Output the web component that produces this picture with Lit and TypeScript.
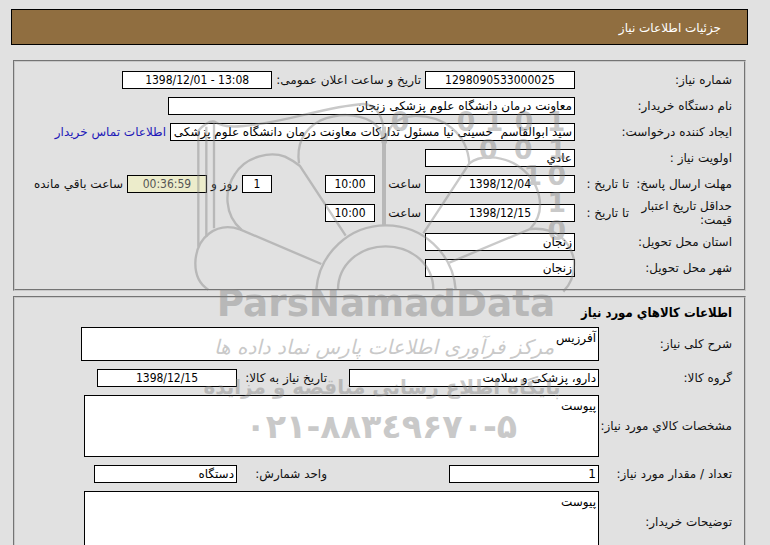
import { LitElement, html, css, svg } from "lit";
import { customElement, property } from "lit/decorators.js";

const digits = [
  { c: "0", x: 660, y: 152 },
  { c: "0", x: 858, y: 152 },
  { c: "1", x: 942, y: 152 },
  { c: "0", x: 1032, y: 152 },
  { c: "1", x: 1128, y: 152 },
  { c: "0", x: 925, y: 236 },
  { c: "0", x: 1030, y: 236 },
  { c: "1", x: 1132, y: 236 },
  { c: "1", x: 1058, y: 314 },
  { c: "0", x: 1130, y: 314 },
  { c: "1", x: 1130, y: 397 },
  { c: "0", x: 1130, y: 480 },
];

@customElement("site-watermark")
export class SiteWatermark extends LitElement {
  static styles = css`
    :host {
      display: block;
      pointer-events: none;
    }
    svg {
      display: block;
      width: 100%;
      height: auto;
      font-family: "DejaVu Sans", sans-serif;
    }
    .lines {
      fill: none;
      stroke: #808080;
      stroke-width: 7;
    }
    .spine {
      stroke-width: 12;
    }
    .art {
      opacity: 0.42;
    }
    .words,
    .bits {
      fill: #808080;
      text-anchor: middle;
    }
    .bits {
      font-size: 80px;
      font-weight: bold;
      direction: ltr;
    }
    .latin {
      font-size: 112px;
      font-weight: bold;
    }
    .script {
      font-size: 60px;
      font-style: italic;
    }
    .tagline {
      font-size: 60px;
      font-weight: bold;
    }
    .phone {
      font-size: 100px;
      font-weight: bold;
      direction: ltr;
      unicode-bidi: bidi-override;
    }
  `;

  render() {
    return html`
      <svg viewBox="0 0 1200 1140" aria-hidden="true">
        <g class="art">
          <g class="lines">
            <path d="M424 552 L180 448 C110 425 48 470 46 550 C46 590 62 615 85 629" />
            <path d="M185 450 C132 405 132 330 165 282 C200 225 275 215 315 230 C340 242 350 250 360 258 L497 467" />
            <path d="M357 250 C350 200 365 150 420 122 C470 100 530 98 575 125 C600 142 608 160 608 190" />
            <path d="M617 190 C620 140 650 112 700 108 C790 105 862 160 868 250 L730 460" />
            <path d="M868 250 C900 225 960 225 1010 255 C1080 300 1105 390 1050 447 L808 548" />
            <path d="M1050 447 C1125 440 1170 480 1182 540 C1185 580 1172 612 1150 635" />
            <path d="M409 629 A209 209 0 0 1 618 436 A209 209 0 0 1 827 629" />
            <path d="M474 629 C474 556 536 499 617 499 C698 499 760 556 760 629" />
            <path d="M55 500 V150 M79 470 V140 M102 445 V125" />
            <path d="M55 152 C75 130 90 122 104 125 C125 140 150 142 190 138 C320 128 430 80 550 72 C590 74 604 105 610 140" />
            <path class="spine" d="M612 140 V435" />
          </g>
          <g class="bits">
            ${digits.map((d) => svg`<text x=${d.x} y=${d.y}>${d.c}</text>`)}
          </g>
          <g class="words">
            <text class="latin" x="618" y="708">ParsNamadData</text>
            <text class="script" x="612" y="822">مرکز فرآوری اطلاعات پارس نماد داده ها</text>
            <text class="tagline" x="606" y="942">پایگاه اطلاع رسانی مناقصه و مزایده</text>
            <text class="phone" x="604" y="1074">۰۲۱-۸۸۳٤۹۶۷۰-۵</text>
          </g>
        </g>
      </svg>
    `;
  }
}

@customElement("app-root")
export class AppRoot extends LitElement {
  @property() caption = "جزئیات اطلاعات نیاز";

  static styles = css`
    :host {
      display: block;
      position: relative;
      box-sizing: border-box;
      height: 100vh;
      overflow: hidden;
      padding: 9px 22px 0 11px;
      background: #e1e1e1;
      color: #111;
      font: 12px/14px "DejaVu Sans", sans-serif;
      direction: rtl;
    }
    * {
      box-sizing: border-box;
    }
    .banner {
      margin: 0;
      padding: 1px 26px;
      border: 1px solid #000;
      background: #906e40;
      color: #fff;
      font-size: 12px;
      font-weight: normal;
      line-height: 34px;
      height: 36px;
    }
    .group {
      min-width: 0;
      margin: 0 2px 5px;
      padding: 5px 12px 8px;
      border: 2px groove #c8c8c8;
    }
    .first {
      margin-top: 15px;
    }
    .heading {
      margin: 0;
      font: bold 13px/20px "DejaVu Sans Condensed", "DejaVu Sans", sans-serif;
      color: #000;
    }
    .row {
      display: flex;
      align-items: center;
      padding: 4px 0;
      white-space: nowrap;
    }
    .tall {
      padding: 2px 0;
    }
    .name {
      flex: none;
      width: 157px;
    }
    .short {
      width: 100px;
      white-space: normal;
    }
    .until {
      flex: none;
      width: 57px;
      padding-right: 3px;
    }
    .item {
      width: 133px;
    }
    .hour {
      flex: none;
      width: 50px;
      padding-right: 4px;
    }
    .after {
      padding: 0 4px;
    }
    .cell {
      flex: none;
      width: 272px;
      display: flex;
    }
    .second {
      flex: none;
      width: 90px;
    }
    input,
    textarea {
      display: block;
      min-width: 0;
      margin: 0;
      padding: 0 2px;
      border: 1px solid #000;
      border-radius: 0;
      background: #fff;
      color: #000;
      font: inherit;
      direction: rtl;
    }
    input {
      height: 18px;
    }
    textarea {
      padding: 3px 2px;
      resize: none;
      overflow: hidden;
    }
    .mid {
      font-family: "DejaVu Sans Condensed", "DejaVu Sans", sans-serif;
      text-align: center;
      direction: ltr;
    }
    .w30 {
      width: 30px;
      margin-right: 53px;
    }
    .w50 {
      width: 50px;
    }
    .w80 {
      width: 80px;
    }
    .w140 {
      width: 140px;
    }
    .w143 {
      width: 143px;
    }
    .w150 {
      width: 150px;
    }
    .w250 {
      width: 250px;
    }
    .w405 {
      width: 405px;
    }
    .w407 {
      width: 407px;
    }
    .w515 {
      width: 515px;
    }
    .w518 {
      width: 518px;
    }
    .low {
      height: 34px;
    }
    .high {
      height: 62px;
    }
    .left {
      background: #ececcb;
      color: #555;
    }
    a {
      padding-right: 4px;
      color: #2218b8;
      text-decoration: none;
    }
    .mark {
      position: absolute;
      top: 80px;
      left: 180px;
      width: 400px;
    }
  `;

  render() {
    return html`
      <h1 class="banner">${this.caption}</h1>

      <fieldset class="group first">
        <div class="row">
          <label class="name" for="number">شماره نیاز:</label>
          <input id="number" class="mid w150" value="1298090533000025" />
          <label class="after" for="announced">تاریخ و ساعت اعلان عمومی:</label>
          <input id="announced" class="mid w150" value="1398/12/01 - 13:08" />
        </div>
        <div class="row">
          <label class="name" for="buyer">نام دستگاه خریدار:</label>
          <input id="buyer" class="w407" value="معاونت درمان دانشگاه علوم پزشکی زنجان" />
        </div>
        <div class="row">
          <label class="name" for="author">ایجاد کننده درخواست:</label>
          <input
            id="author"
            class="w405"
            value="سید ابوالقاسم  حسینی نیا مسئول تدارکات معاونت درمان دانشگاه علوم پزشکی زنجان"
          />
          <a href="#contact">اطلاعات تماس خریدار</a>
        </div>
        <div class="row">
          <label class="name" for="priority">اولویت نیاز :</label>
          <input id="priority" class="w150" value="عادي" />
        </div>
        <div class="row">
          <label class="name short" for="deadline">مهلت ارسال پاسخ:</label>
          <span class="until">تا تاریخ :</span>
          <input id="deadline" class="mid w150" value="1398/12/04" />
          <label class="hour" for="deadline-hour">ساعت</label>
          <input id="deadline-hour" class="mid w50" value="10:00" />
          <input id="days" class="mid w30" value="1" />
          <label class="after" for="days">روز و</label>
          <input id="remaining" class="mid w80 left" value="00:36:59" />
          <label class="after" for="remaining">ساعت باقي مانده</label>
        </div>
        <div class="row tall">
          <label class="name short" for="validity">حداقل تاریخ اعتبار قیمت:</label>
          <span class="until">تا تاریخ :</span>
          <input id="validity" class="mid w150" value="1398/12/15" />
          <label class="hour" for="validity-hour">ساعت</label>
          <input id="validity-hour" class="mid w50" value="10:00" />
        </div>
        <div class="row">
          <label class="name" for="province">استان محل تحویل:</label>
          <input id="province" class="w150" value="زنجان" />
        </div>
        <div class="row">
          <label class="name" for="city">شهر محل تحویل:</label>
          <input id="city" class="w150" value="زنجان" />
        </div>
      </fieldset>

      <fieldset class="group">
        <h2 class="heading">اطلاعات کالاهاي مورد نیاز</h2>
        <div class="row">
          <label class="name item" for="summary">شرح کلی نیاز:</label>
          <textarea id="summary" class="w518 low" .value=${"آفرزیس"}></textarea>
        </div>
        <div class="row">
          <label class="name item" for="category">گروه کالا:</label>
          <span class="cell">
            <input id="category" class="w250" value="دارو، پزشکی و سلامت" />
          </span>
          <label class="second" for="needed">تاریخ نیاز به کالا:</label>
          <input id="needed" class="mid w140" value="1398/12/15" />
        </div>
        <div class="row">
          <label class="name item" for="spec">مشخصات کالاي مورد نیاز:</label>
          <textarea id="spec" class="w515 high" .value=${"پیوست"}></textarea>
        </div>
        <div class="row">
          <label class="name item" for="amount">تعداد / مقدار مورد نیاز:</label>
          <span class="cell">
            <input id="amount" class="w150" value="1" />
          </span>
          <label class="second" for="unit">واحد شمارش:</label>
          <input id="unit" class="w143" value="دستگاه" />
        </div>
        <div class="row">
          <label class="name item" for="notes">توضیحات خریدار:</label>
          <textarea id="notes" class="w515 high" .value=${"پیوست"}></textarea>
        </div>
      </fieldset>

      <site-watermark class="mark"></site-watermark>
    `;
  }
}
